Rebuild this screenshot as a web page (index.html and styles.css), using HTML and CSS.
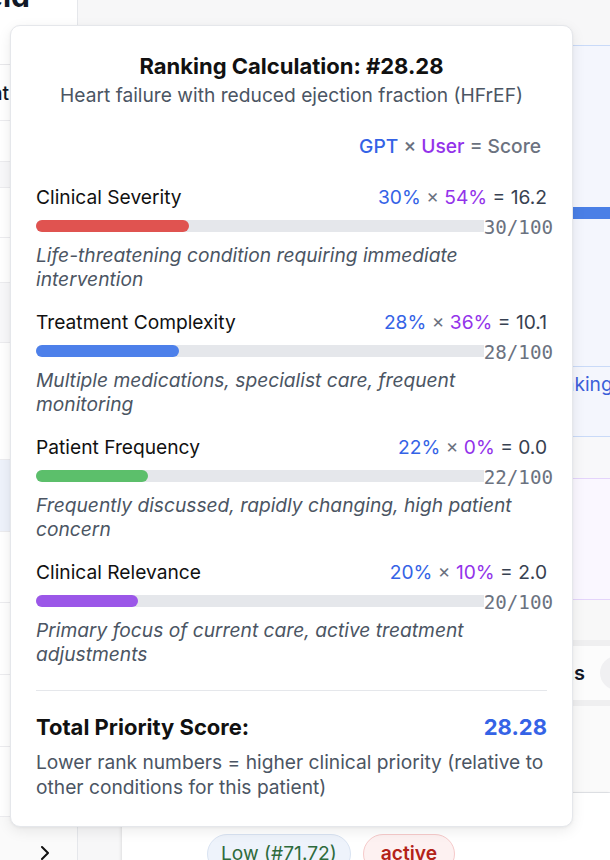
FILE: index.html
```html
<!DOCTYPE html>
<html lang="en">
<head>
<meta charset="utf-8">
<title>Ranking Calculation</title>
<link rel="stylesheet" href="styles.css">
</head>
<body>
<div class="app">
  <aside class="sidebar">
    <div class="sb-head"><span class="sb-title">Mansfield</span></div>
    <div class="sb-row sb-h56"><span class="sb-text">Treatment</span></div>
    <div class="sb-row sb-h41"></div>
    <div class="sb-row sb-h26 sb-gray"></div>
    <div class="sb-row sb-h50"></div>
    <div class="sb-row sb-h45"></div>
    <div class="sb-row sb-h60 sb-gray"></div>
    <div class="sb-row sb-h117"></div>
    <div class="sb-row sb-h72 sb-active"></div>
    <div class="sb-row sb-h71"></div>
    <div class="sb-row sb-h72"></div>
    <div class="sb-row sb-h72"></div>
    <div class="sb-row sb-h70"></div>
    <div class="sb-foot">
      <svg class="chev" width="10" height="16" viewBox="0 0 10 16"><polyline points="2,2 8,8 2,14" fill="none" stroke="#111" stroke-width="2" stroke-linecap="round" stroke-linejoin="round"/></svg>
    </div>
  </aside>
  <main class="main">
    <div class="main-top"></div>
    <section class="card-blue">
      <div class="blue-bar"></div>
      <div class="blue-link"><span class="link">Re-ranking</span></div>
    </section>
    <div class="spacer-41"></div>
    <section class="card-purple"></section>
    <div class="spacer-40"></div>
    <div class="cond-row">
      <span class="cond-title">Conditions</span>
      <span class="cond-pill"></span>
    </div>
    <div class="cond-body"></div>
    <div class="panel">
      <span class="pill pill-low">Low (#71.72)</span>
      <span class="pill pill-active">active</span>
    </div>
  </main>
</div>

<div class="popover">
  <div class="pop-head">
    <h2 class="pop-title">Ranking Calculation: #28.28</h2>
    <p class="pop-sub">Heart failure with reduced ejection fraction (HFrEF)</p>
  </div>
  <div class="legend">
    <span class="c-gpt">GPT</span> <span class="c-op">×</span> <span class="c-usr">User</span> <span class="c-op">=</span> <span class="c-op">Score</span>
  </div>

  <div class="factors">
    <div class="factor">
      <div class="factor-row">
        <span class="factor-name">Clinical Severity</span>
        <span class="factor-calc"><span class="c-gpt">30%</span> <span class="c-op">×</span> <span class="c-usr">54%</span> = 16.2</span>
      </div>
      <div class="track"><div class="fill fill-red" style="width:30%"></div><span class="track-label">30/100</span></div>
      <p class="factor-desc">Life-threatening condition requiring immediate intervention</p>
    </div>

    <div class="factor">
      <div class="factor-row">
        <span class="factor-name">Treatment Complexity</span>
        <span class="factor-calc"><span class="c-gpt">28%</span> <span class="c-op">×</span> <span class="c-usr">36%</span> = 10.1</span>
      </div>
      <div class="track"><div class="fill fill-blue" style="width:28%"></div><span class="track-label">28/100</span></div>
      <p class="factor-desc">Multiple medications, specialist care, frequent monitoring</p>
    </div>

    <div class="factor">
      <div class="factor-row">
        <span class="factor-name">Patient Frequency</span>
        <span class="factor-calc"><span class="c-gpt">22%</span> <span class="c-op">×</span> <span class="c-usr">0%</span> = 0.0</span>
      </div>
      <div class="track"><div class="fill fill-green" style="width:22%"></div><span class="track-label">22/100</span></div>
      <p class="factor-desc">Frequently discussed, rapidly changing, high patient concern</p>
    </div>

    <div class="factor">
      <div class="factor-row">
        <span class="factor-name">Clinical Relevance</span>
        <span class="factor-calc"><span class="c-gpt">20%</span> <span class="c-op">×</span> <span class="c-usr">10%</span> = 2.0</span>
      </div>
      <div class="track"><div class="fill fill-purple" style="width:20%"></div><span class="track-label">20/100</span></div>
      <p class="factor-desc">Primary focus of current care, active treatment adjustments</p>
    </div>
  </div>

  <div class="total">
    <div class="total-row">
      <span class="total-label">Total Priority Score:</span>
      <span class="total-val">28.28</span>
    </div>
    <p class="total-note">Lower rank numbers = higher clinical priority (relative to other conditions for this patient)</p>
  </div>
</div>
</body>
</html>
```

FILE: styles.css
```css
* { box-sizing: border-box; }
html, body { margin: 0; padding: 0; }
body {
  width: 610px;
  height: 860px;
  overflow: hidden;
  position: relative;
  background: #f7f7f8;
  font-family: Inter, "Noto Sans", sans-serif;
  font-size: 19.2px;
  color: #111827;
}

/* ---------- background app ---------- */
.app {
  display: grid;
  grid-template-columns: 78px 1fr;
  height: 860px;
}
.sidebar {
  background: #fff;
  border-right: 1px solid #e5e7eb;
  overflow: hidden;
  display: flex;
  flex-direction: column;
}
.sb-head {
  height: 65px;
  flex: none;
  border-bottom: 1px solid #e8e8eb;
  display: flex;
  justify-content: flex-end;
  padding-right: 47px;
}
.sb-title {
  font-size: 30px;
  line-height: 30px;
  font-weight: 700;
  white-space: nowrap;
  margin-top: -19px;
  color: #111827;
}
.sb-row {
  flex: none;
  border-bottom: 1px solid #ececef;
  display: flex;
  justify-content: flex-end;
  align-items: center;
  padding-right: 68px;
}
.sb-text { font-size: 19.2px; font-weight: 500; white-space: nowrap; }
.sb-gray { background: #f8f8fa; }
.sb-active { background: #eef2fb; }
.sb-h56 { height: 56px; }
.sb-h41 { height: 41px; }
.sb-h26 { height: 26px; }
.sb-h50 { height: 50px; }
.sb-h45 { height: 45px; }
.sb-h60 { height: 60px; }
.sb-h117 { height: 117px; }
.sb-h72 { height: 72px; }
.sb-h71 { height: 71px; }
.sb-h70 { height: 70px; }
.sb-foot {
  flex: 1;
  background: #fafafa;
  display: flex;
  align-items: flex-start;
  padding: 28px 0 0 40px;
}
.chev { display: block; }

.main {
  display: flex;
  flex-direction: column;
  padding-left: 44px;
  overflow: hidden;
}
.main-top { height: 45px; flex: none; }
.card-blue {
  height: 392px;
  flex: none;
  background: #f4f6fd;
  border-top: 1px solid #c9daf8;
  border-bottom: 1px solid #c9daf8;
  display: flex;
  flex-direction: column;
}
.blue-bar {
  margin-top: 161px;
  margin-left: 300px;
  height: 12px;
  background: #4a7fe6;
  flex: none;
  align-self: flex-start;
  width: 300px;
}
.blue-link {
  margin-top: auto;
  height: 70px;
  border-top: 1px solid #c9daf8;
  padding: 5px 0 0 391px;
}
.link { color: #3b5fd9; font-size: 19.2px; line-height: 24px; white-space: nowrap; }
.spacer-41 { height: 41px; flex: none; background: #f8f8fa; }
.card-purple {
  height: 122px;
  flex: none;
  background: #faf7ff;
  border-top: 1px solid #e4d4fb;
  border-bottom: 1px solid #e4d4fb;
}
.spacer-40 { height: 40px; flex: none; background: #f8f8f8; }
.cond-row {
  height: 66px;
  flex: none;
  background: #fcfcfc;
  border-top: 6px solid #efeff0;
  border-bottom: 6px solid #efeff0;
  display: flex;
  align-items: center;
}
.cond-title {
  width: 463px;
  flex: none;
  text-align: right;
  font-size: 20px;
  font-weight: 600;
  white-space: nowrap;
}
.cond-pill {
  margin-left: 15px;
  width: 40px;
  height: 34px;
  border-radius: 17px;
  background: #f0f0f2;
  flex: none;
}
.cond-body {
  height: 87px;
  flex: none;
  background: #fafafa;
  border-bottom: 1px solid #e5e7eb;
}
.panel {
  flex: 1;
  background: #fff;
  box-shadow: -1px 0 3px rgba(0,0,0,0.10);
  display: flex;
  gap: 12px;
  padding: 41px 0 0 85px;
}
.pill {
  display: inline-block;
  height: 40px;
  padding: 6px 13px 0;
  border-radius: 20px;
  font-size: 19.2px;
  line-height: 24px;
  white-space: nowrap;
}
.pill-low { background: #eef3fb; border: 1px solid #d9e3f2; color: #2e6b3c; }
.pill-active { background: #fdf1f1; border: 1px solid #f6caca; color: #b42318; font-weight: 600; padding: 6px 17px 0; }

/* ---------- popover ---------- */
.popover {
  position: absolute;
  left: 10px;
  top: 25px;
  width: 563px;
  background: #fff;
  border: 1px solid #e5e7eb;
  border-radius: 10px;
  box-shadow: 0 4px 14px rgba(0,0,0,0.08), 0 1px 3px rgba(0,0,0,0.05);
  padding: 26px 25px 26px;
}
.pop-head { text-align: center; }
.pop-title {
  margin: 0;
  font-size: 22px;
  line-height: 28px;
  font-weight: 700;
  color: #111;
}
.pop-sub {
  margin: 3px 0 0;
  font-size: 19.2px;
  line-height: 24px;
  color: #4b5563;
}
.legend {
  margin-top: 27px;
  text-align: right;
  padding-right: 6px;
  font-size: 19.2px;
  line-height: 24px;
  font-weight: 500;
}
.c-gpt { color: #3563e6; }
.c-usr { color: #9333ea; }
.c-op { color: #6b7280; }

.factors {
  margin-top: 27px;
  display: flex;
  flex-direction: column;
  gap: 19px;
}
.factor-row {
  display: flex;
  justify-content: space-between;
  font-size: 19.2px;
  line-height: 24px;
}
.factor-name { color: #111; }
.factor-calc { color: #374151; white-space: nowrap; }
.track {
  position: relative;
  margin-top: 11px;
  height: 12px;
  border-radius: 6px;
  background: #e5e7eb;
}
.fill { height: 12px; border-radius: 6px; }
.fill-red { background: #e05350; }
.fill-blue { background: #4d80ea; }
.fill-green { background: #5cbf6b; }
.fill-purple { background: #9b57e8; }
.track-label {
  position: absolute;
  right: -6px;
  top: -2px;
  background: #fff;
  font-family: "DejaVu Sans Mono", "Liberation Mono", monospace;
  font-size: 19.2px;
  line-height: 19.2px;
  color: #6b7280;
}
.factor-desc {
  margin: 11px 0 0;
  font-size: 19.2px;
  line-height: 24px;
  font-style: italic;
  color: #4b5563;
}

.total {
  margin-top: 24px;
  border-top: 1px solid #e5e7eb;
  padding-top: 22px;
}
.total-row {
  display: flex;
  justify-content: space-between;
  font-size: 22px;
  line-height: 28px;
  font-weight: 700;
}
.total-label { color: #111; }
.total-val { color: #3563e6; }
.total-note {
  margin: 9px 0 0;
  font-size: 19.2px;
  line-height: 25px;
  color: #4b5563;
}
```
